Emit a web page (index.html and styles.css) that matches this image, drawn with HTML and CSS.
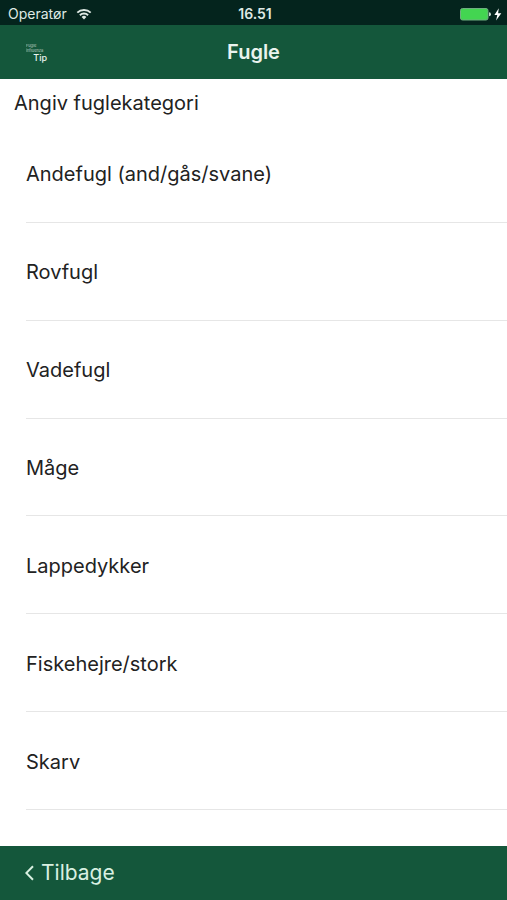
FILE: index.html
```html
<!DOCTYPE html>
<html lang="da">
<head>
<meta charset="utf-8">
<meta name="viewport" content="width=device-width, initial-scale=1">
<title>Fugle</title>
<link rel="stylesheet" href="styles.css">
</head>
<body>
<div class="status">
  <div class="carrier">
    <span>Operatør</span>
    <svg class="wifi" viewBox="0 0 16 12" aria-hidden="true">
      <path d="M1.3 4.7a9.5 9.5 0 0 1 13.4 0M3.9 7.2a5.9 5.9 0 0 1 8.2 0" fill="none" stroke="currentColor" stroke-width="1.9"/>
      <path d="M5.6 9a3.5 3.5 0 0 1 4.8 0L8 11.5z" fill="currentColor"/>
    </svg>
  </div>
  <time class="clock">16.51</time>
  <div class="power">
    <svg class="battery" viewBox="0 0 42 14" aria-hidden="true">
      <rect x="0.5" y="1.5" width="27.5" height="11.5" rx="2" fill="#43d551" stroke="#6fae80"/>
      <path d="M29 5.2a2 2 0 0 1 0 4z" fill="#c5d8ce"/>
      <path d="M38.8 1.2 34.4 8h2.9l-1.2 5.4L41.3 6.3h-3.2z" fill="#fff"/>
    </svg>
  </div>
</div>
<header class="bar">
  <div class="logo"><span>Fugle</span><span>influenza</span><b>Tip</b></div>
  <h1 class="title">Fugle</h1>
</header>
<main class="content">
  <h2 class="prompt">Angiv fuglekategori</h2>
  <ul class="list">
    <li><button type="button">Andefugl (and/gås/svane)</button></li>
    <li><button type="button">Rovfugl</button></li>
    <li><button type="button">Vadefugl</button></li>
    <li><button type="button">Måge</button></li>
    <li><button type="button">Lappedykker</button></li>
    <li><button type="button">Fiskehejre/stork</button></li>
    <li><button type="button">Skarv</button></li>
  </ul>
</main>
<footer class="footer">
  <button class="back" type="button">
    <svg class="chevron" viewBox="0 0 10 16" aria-hidden="true"><path d="M8 1.3 1.3 8 8 14.7" fill="none" stroke="currentColor" stroke-width="2"/></svg>
    <span>Tilbage</span>
  </button>
</footer>
</body>
</html>
```
FILE: styles.css
```css
* {
  box-sizing: border-box;
}

body {
  margin: 0;
  min-height: 100vh;
  display: flex;
  flex-direction: column;
  background: #fff;
  color: #222;
  font-family: Inter, "Liberation Sans", sans-serif;
}

button {
  border: 0;
  padding: 0;
  background: none;
  color: inherit;
  font: inherit;
  text-align: left;
}

.status {
  display: grid;
  grid-template-columns: 1fr auto 1fr;
  align-items: center;
  height: 25px;
  padding: 2px 5px 0 8px;
  background: #04241d;
  color: #dfe9e4;
  font-size: 14px;
  line-height: 18px;
}

.carrier {
  display: flex;
  align-items: center;
  gap: 9px;
}

.wifi {
  width: 16px;
  height: 12px;
}

.clock {
  font-weight: 600;
}

.power {
  display: flex;
  justify-content: flex-end;
}

.battery {
  width: 42px;
  height: 14px;
}

.bar {
  display: grid;
  grid-template-columns: 1fr auto 1fr;
  align-items: center;
  height: 54px;
  padding: 0 26px;
  background: #14573b;
  color: #eaf3ee;
}

.logo {
  display: flex;
  flex-direction: column;
  width: 21px;
  font-size: 4px;
  line-height: 5px;
}

.logo span {
  opacity: 0.7;
}

.logo b {
  align-self: flex-end;
  font-size: 9px;
  line-height: 9px;
  font-weight: 500;
}

.title {
  margin: 0;
  font-size: 20px;
  line-height: 24px;
  font-weight: 600;
}

.content {
  flex: 1;
  display: flex;
  flex-direction: column;
  padding-bottom: 36px;
}

.prompt {
  margin: 0;
  padding: 12px 14px 10px;
  font-size: 20px;
  line-height: 24px;
  font-weight: 400;
}

.list {
  flex: 1;
  display: grid;
  grid-auto-rows: 1fr;
  margin: 0;
  padding: 0 0 0 26px;
  list-style: none;
  font-size: 20px;
  line-height: 24px;
}

.list li {
  display: flex;
  min-height: 64px;
  border-bottom: 1px solid #e6e6e6;
}

.list button {
  flex: 1;
  padding-top: 2px;
}

.footer {
  display: flex;
  align-items: center;
  height: 54px;
  padding: 0 25px;
  background: #14573b;
  color: #d9f0e1;
}

.back {
  display: flex;
  align-items: center;
  gap: 6px;
  font-size: 21px;
  line-height: 28px;
}

.chevron {
  width: 10px;
  height: 16px;
}
```
